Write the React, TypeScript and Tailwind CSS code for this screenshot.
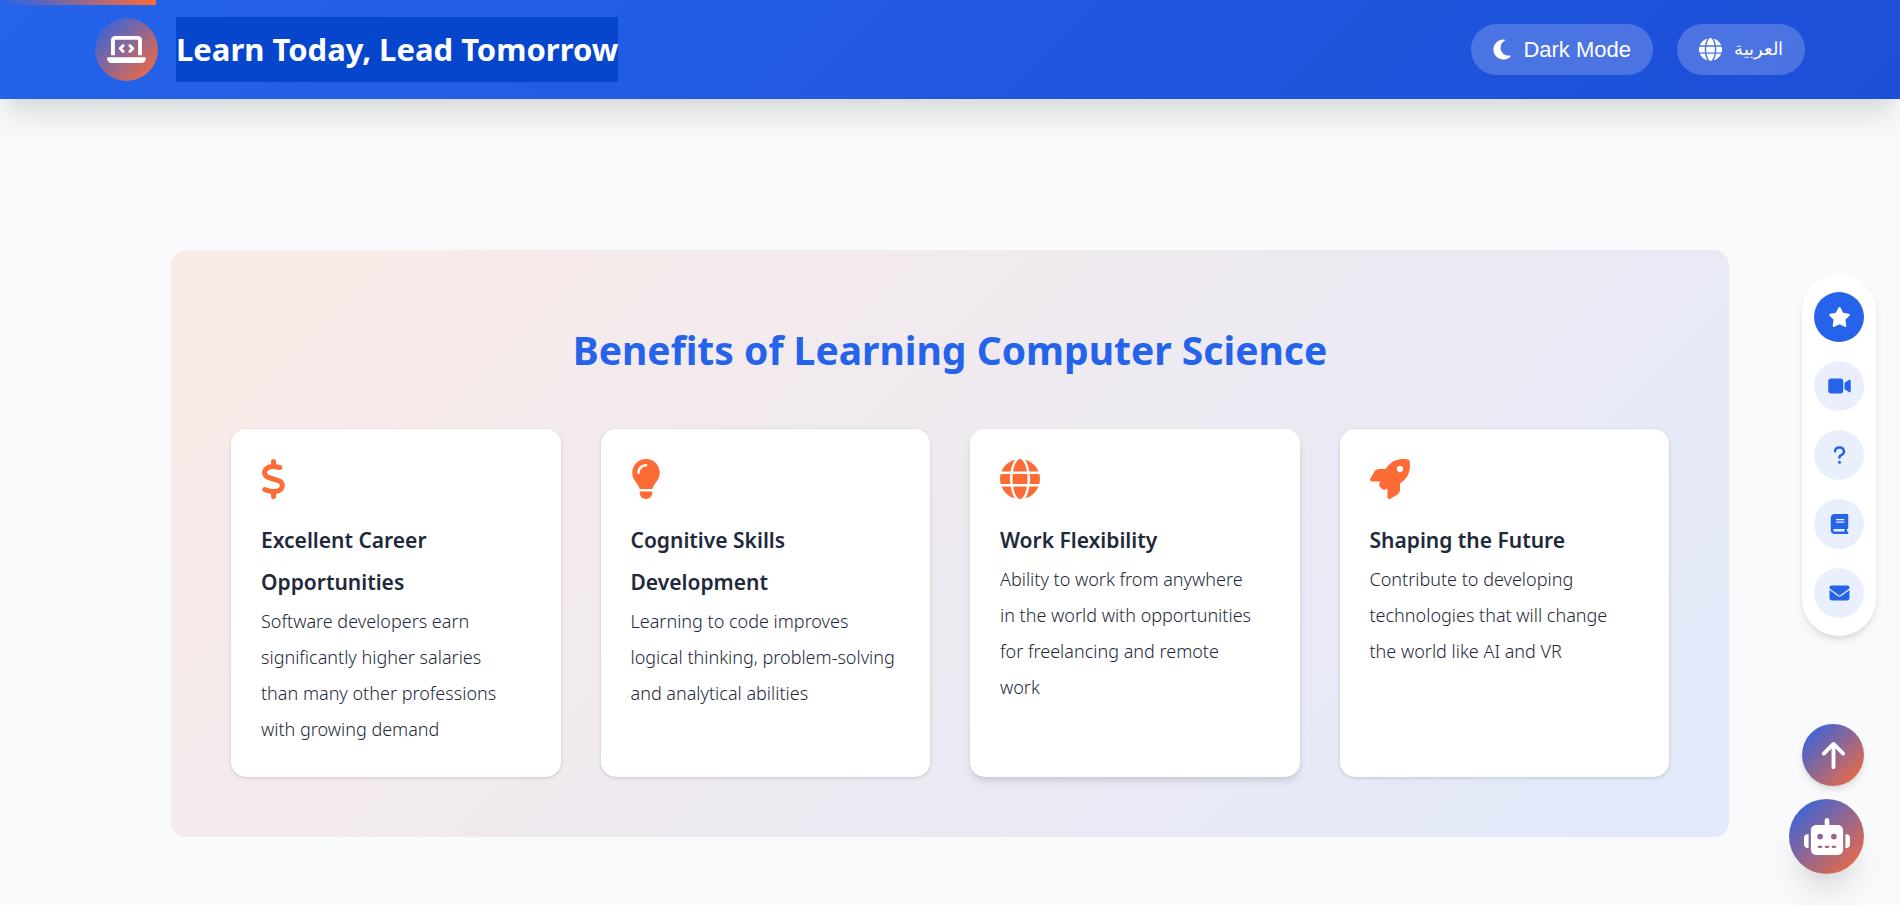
import type { IconType } from "react-icons";
import {
  FaArrowUp,
  FaBook,
  FaDollarSign,
  FaEnvelope,
  FaGlobe,
  FaLaptopCode,
  FaLightbulb,
  FaMoon,
  FaQuestion,
  FaRobot,
  FaRocket,
  FaStar,
  FaVideo,
} from "react-icons/fa6";

type Benefit = {
  icon: IconType;
  iconWidth: string;
  title: string;
  lines: string[];
  raised?: boolean;
};

const benefits: Benefit[] = [
  {
    icon: FaDollarSign,
    iconWidth: "w-[25px]",
    title: "Excellent Career Opportunities",
    lines: [
      "Software developers earn",
      "significantly higher salaries",
      "than many other professions",
      "with growing demand",
    ],
  },
  {
    icon: FaLightbulb,
    iconWidth: "w-[30px]",
    title: "Cognitive Skills Development",
    lines: [
      "Learning to code improves",
      "logical thinking, problem-solving",
      "and analytical abilities",
    ],
  },
  {
    icon: FaGlobe,
    iconWidth: "w-10",
    title: "Work Flexibility",
    lines: [
      "Ability to work from anywhere",
      "in the world with opportunities",
      "for freelancing and remote",
      "work",
    ],
    raised: true,
  },
  {
    icon: FaRocket,
    iconWidth: "w-10",
    title: "Shaping the Future",
    lines: [
      "Contribute to developing",
      "technologies that will change",
      "the world like AI and VR",
    ],
  },
];

const sections: { icon: IconType; label: string; active?: boolean }[] = [
  { icon: FaStar, label: "Benefits", active: true },
  { icon: FaVideo, label: "Videos" },
  { icon: FaQuestion, label: "Questions" },
  { icon: FaBook, label: "Resources" },
  { icon: FaEnvelope, label: "Contact" },
];

function Header() {
  return (
    <header className="relative z-10 flex items-center justify-between bg-linear-[135deg,#2563eb,#1d4ed8] px-[5%] py-[17px] text-white shadow-[0_25px_31px_-6px_rgba(0,0,0,0.1),0_13px_13px_-6px_rgba(0,0,0,0.04)]">
      <a href="#top" className="flex items-center gap-[18px]">
        <span className="flex size-[63px] items-center justify-center rounded-full bg-linear-[135deg,#2563eb,#ff6b35]">
          <FaLaptopCode className="h-[31px] w-[39px]" />
        </span>
        <span className="bg-[#0646cd] text-[31px] leading-[65px] font-bold">
          Learn Today, Lead Tomorrow
        </span>
      </a>
      <div className="flex items-center gap-6 font-['Liberation_Sans',Arial,sans-serif]">
        <button
          type="button"
          className="flex h-[51px] items-center gap-3 rounded-full bg-white/20 px-[22px] text-[22px]"
        >
          <FaMoon className="h-[23px] w-[18px]" />
          Dark Mode
        </button>
        <button
          type="button"
          lang="ar"
          className="flex h-[51px] items-center gap-3 rounded-full bg-white/20 px-[22px] text-[18px]"
        >
          <FaGlobe className="size-[23px]" />
          العربية
        </button>
      </div>
    </header>
  );
}

function BenefitCard({ icon: Icon, iconWidth, title, lines, raised }: Benefit) {
  return (
    <article
      className={`rounded-[15px] bg-white p-[30px] ${
        raised
          ? "shadow-[0_5px_8px_-1px_rgba(0,0,0,0.1),0_3px_5px_-1px_rgba(0,0,0,0.06)]"
          : "shadow-[0_1px_4px_rgba(0,0,0,0.1),0_1px_3px_rgba(0,0,0,0.06)]"
      }`}
    >
      <Icon className={`mb-5 h-10 text-[#ff6b35] ${iconWidth}`} />
      <h3 className="text-[21px] leading-[42px] font-semibold">{title}</h3>
      <p className="text-lg leading-9 font-light xl:whitespace-pre-line">{lines.join("\n")}</p>
    </article>
  );
}

export default function App() {
  return (
    <div
      id="top"
      className="min-h-screen bg-[#f8fafc] font-['Noto_Sans','Open_Sans',sans-serif] text-[#1e293b]"
    >
      <div className="fixed top-0 left-0 z-20 h-[5px] w-[156px] bg-linear-[90deg,#2563eb,#ff6b35]" />
      <Header />

      <main className="px-[9%] pt-[151px] pb-[68px]">
        <section className="rounded-[15px] bg-linear-[135deg,#fbebe6,#e1e9fb] p-[60px]">
          <h2 className="mb-10 text-center text-[39px] leading-[79px] font-bold text-[#2563eb]">
            Benefits of Learning Computer Science
          </h2>
          <div className="grid grid-cols-1 gap-10 md:grid-cols-2 xl:grid-cols-4">
            {benefits.map((benefit) => (
              <BenefitCard key={benefit.title} {...benefit} />
            ))}
          </div>
        </section>
      </main>

      <nav
        aria-label="Page sections"
        className="fixed top-[274px] right-6 flex flex-col gap-[19px] rounded-full bg-white px-3 py-[18px] shadow-[0_5px_8px_-1px_rgba(0,0,0,0.1),0_3px_5px_-1px_rgba(0,0,0,0.06)]"
      >
        {sections.map(({ icon: Icon, label, active }) => (
          <a
            key={label}
            href={`#${label.toLowerCase()}`}
            aria-label={label}
            className={`flex size-[50px] items-center justify-center rounded-full ${
              active ? "bg-[#2563eb] text-white" : "bg-[#e9effd] text-[#2563eb]"
            }`}
          >
            <Icon className="h-5 w-[23px]" />
          </a>
        ))}
      </nav>

      <div className="fixed right-9 bottom-[31px] flex flex-col items-end gap-[13px] text-white">
        <button
          type="button"
          aria-label="Back to top"
          className="flex size-[62px] items-center justify-center rounded-full bg-linear-[135deg,#2563eb,#ff6b35] shadow-[0_5px_8px_-1px_rgba(0,0,0,0.1),0_3px_5px_-1px_rgba(0,0,0,0.06)]"
        >
          <FaArrowUp className="size-[31px]" />
        </button>
        <button
          type="button"
          aria-label="Open chat assistant"
          className="flex size-[75px] items-center justify-center rounded-full bg-linear-[135deg,#2563eb,#ff6b35] shadow-[0_25px_31px_-6px_rgba(0,0,0,0.1),0_13px_13px_-6px_rgba(0,0,0,0.04)]"
        >
          <FaRobot className="h-[37px] w-[46px]" />
        </button>
      </div>
    </div>
  );
}
